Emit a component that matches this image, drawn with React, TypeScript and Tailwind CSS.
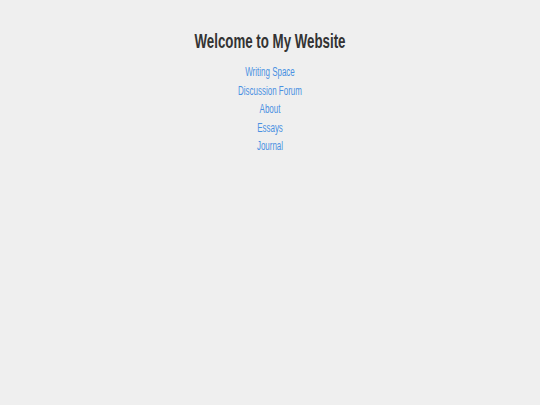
export default function App() {
  const links = ['Writing Space', 'Discussion Forum', 'About', 'Essays', 'Journal'];
  return (
    <div className="min-h-[405px] bg-[#efefef] pt-[29px] text-center font-['Liberation_Sans',Arial,sans-serif]">
      <div className="scale-x-[0.665] origin-center">
        <h1 className="text-[20px] font-bold leading-[24px] text-[#333]">Welcome to My Website</h1>
        <ul className="mt-[10px] flex flex-col items-center">
          {links.map((l) => (
            <li key={l} className="text-[12px] leading-[18.6px] text-[#4a90e2]">
              <a href="#">{l}</a>
            </li>
          ))}
        </ul>
      </div>
    </div>
  );
}
